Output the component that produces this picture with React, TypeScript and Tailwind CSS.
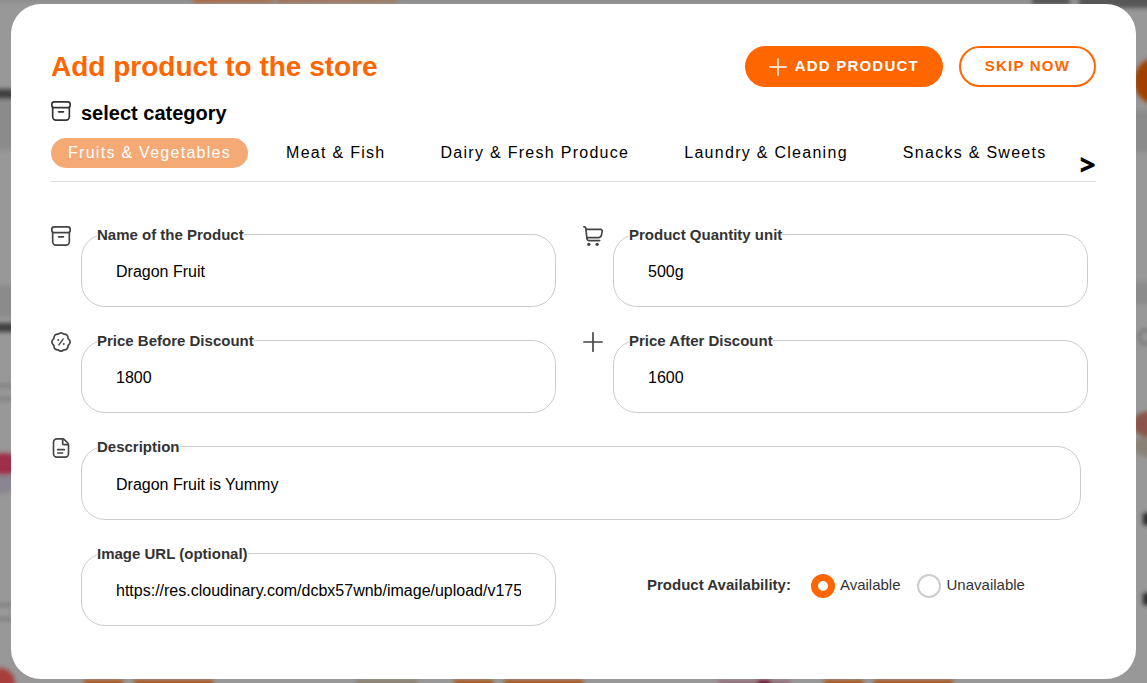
import { useState, type ReactNode } from "react";

type IconProps = { className?: string };

function BoxIcon({ className = "" }: IconProps) {
  return (
    <svg viewBox="0 0 24 24" fill="none" stroke="currentColor" strokeWidth="2" strokeLinecap="round" className={className} aria-hidden="true">
      <rect x="1" y="1" width="22" height="7" rx="3" />
      <path d="M2 8v11a4 4 0 0 0 4 4h12a4 4 0 0 0 4-4V8" />
      <path d="M9 13h6" />
    </svg>
  );
}

function CartIcon({ className = "" }: IconProps) {
  return (
    <svg viewBox="0 0 24 24" fill="none" stroke="currentColor" strokeWidth="2" strokeLinecap="round" strokeLinejoin="round" className={className} aria-hidden="true">
      <path d="M1 1h.4a2 2 0 0 1 2 1.800l1.200 11.600A3 3 0 0 0 7.600 17.500H20" />
      <path d="M4 4h17a2 2 0 0 1 2 2.400l-.8 4.300A4 4 0 0 1 18.300 14H5" />
      <circle cx="7" cy="22" r="2" fill="currentColor" stroke="none" />
      <circle cx="17" cy="22" r="2" fill="currentColor" stroke="none" />
    </svg>
  );
}

function BadgePercentIcon({ className = "" }: IconProps) {
  return (
    <svg viewBox="0 0 24 24" fill="none" stroke="currentColor" strokeWidth="2" strokeLinecap="round" strokeLinejoin="round" className={className} aria-hidden="true">
      <path d="M12 1c1.300 0 2.500.8 3.300 1.600 1.300-.1 2.900.2 3.900 1.200s1.300 2.600 1.200 3.900C21.600 8.800 23 10.300 23 12s-1.400 3.200-2.600 4.300c.1 1.300-.2 2.900-1.200 3.900s-2.600 1.300-3.900 1.200C14.500 22.200 13.300 23 12 23s-2.500-.8-3.300-1.600c-1.300.1-2.900-.2-3.900-1.200s-1.300-2.600-1.200-3.900C2.400 15.200 1 13.700 1 12s1.400-3.200 2.600-4.300c-.1-1.300.2-2.900 1.200-3.900s2.600-1.300 3.900-1.200C9.500 1.800 10.700 1 12 1Z" />
      <path d="m14.500 8.500-5 7" strokeWidth="1.700" />
      <circle cx="8.700" cy="9.500" r="1.200" fill="currentColor" stroke="none" />
      <circle cx="15.300" cy="14.500" r="1.200" fill="currentColor" stroke="none" />
    </svg>
  );
}

function PlusIcon({ className = "" }: IconProps) {
  return (
    <svg viewBox="0 0 24 24" fill="none" stroke="currentColor" strokeWidth="2" strokeLinecap="round" className={className} aria-hidden="true">
      <path d="M12 1v22M1 12h22" />
    </svg>
  );
}

function DocumentIcon({ className = "" }: IconProps) {
  return (
    <svg viewBox="0 0 24 24" fill="none" stroke="currentColor" strokeWidth="2" strokeLinecap="round" strokeLinejoin="round" className={className} aria-hidden="true">
      <path d="M7 1h6.500c1 0 2 .4 2.800 1.200l3.500 3.500C20.600 6.500 21 7.500 21 8.500V19a4 4 0 0 1-4 4H7a4 4 0 0 1-4-4V5a4 4 0 0 1 4-4Z" />
      <path d="M14 1.500V7a1 1 0 0 0 1 1h5.500" />
      <path d="M8 14h8M8 18h6" />
    </svg>
  );
}

const CATEGORIES = [
  "Fruits & Vegetables",
  "Meat & Fish",
  "Dairy & Fresh Produce",
  "Laundry & Cleaning",
  "Snacks & Sweets",
];

type FieldProps = {
  id: string;
  label: string;
  value: string;
  icon?: ReactNode;
  className?: string;
  height?: string;
};

function Field({ id, label, value, icon, className = "", height = "h-[73px]" }: FieldProps) {
  return (
    <div className={`flex ${className}`}>
      <div className="w-[30px] shrink-0 text-[#444]">{icon}</div>
      <div className="relative mt-2 min-w-0 flex-1">
        <label htmlFor={id} className="absolute -top-2 left-4 bg-white text-[15px] leading-[18px] font-bold text-[#333]">
          {label}
        </label>
        <input
          id={id}
          defaultValue={value}
          className={`w-full rounded-3xl border border-[#ccc] bg-white px-[34px] pt-[3px] text-base text-black outline-none focus:border-[#ff6600] ${height}`}
        />
      </div>
    </div>
  );
}

const RADIO =
  "size-6 appearance-none rounded-full border-2 border-[#ccc] bg-white checked:border-[7px] checked:border-[#ff6600]";

/* Dimmed, out-of-focus store page behind the dialog. */
function Backdrop() {
  return (
    <svg viewBox="0 0 1147 683" preserveAspectRatio="none" className="absolute inset-0 size-full bg-[#989898]" aria-hidden="true">
      <defs>
        <linearGradient id="title-fade">
          <stop offset="0" stopColor="#ab6840" />
          <stop offset="1" stopColor="#9c7a66" />
        </linearGradient>
        <filter id="soft" x="-5%" y="-5%" width="110%" height="110%">
          <feGaussianBlur stdDeviation="2" />
        </filter>
      </defs>
      <g filter="url(#soft)">
        <path fill="#8b8b8b" d="M-9-9h1165V2H-9zM-9 100h30v50H-9zM-9 285h30v32H-9zM1130 110h30v42h-30zM1130 282h30v22h-30z" />
        <path fill="url(#title-fade)" d="M193-8h80V3h-80zM277-8h120V3H277z" />
        <path fill="#575757" d="M1032-8h38V5h-38zM1079-8h80V8h-80z" />
        <rect x="1134" y="57" width="60" height="48" rx="24" fill="#a03f00" />
        <path fill="#404040" d="M-9 89H14v10H-9zM-9 323H14v9H-9z" />
        <path fill="#808080" d="M-9 384H14v4H-9zM-9 397H14v4H-9zM-9 603H14v4H-9zM-9 617H14v4H-9z" />
        <ellipse cx="2" cy="482" rx="14" ry="12" fill="#8a8590" />
        <ellipse cx="4" cy="464" rx="16" ry="11" fill="#9f2f48" />
        <circle cx="0" cy="683" r="15" fill="#a83c3c" />
        <circle cx="1146" cy="337" r="7" fill="none" stroke="#777" strokeWidth="3" />
        <ellipse cx="1150" cy="446" rx="17" ry="11" fill="#8a8176" />
        <ellipse cx="1150" cy="424" rx="18" ry="13" fill="#8b554c" />
        <path fill="#2b2b2b" d="M1143 513h14v12h-14zM1143 593h14v12h-14z" />
        <path fill="#ad5418" d="M84 680h39v12H84zM134 680h79v12h-79zM454 680h39v12h-39zM504 680h79v12h-79zM824 680h39v12h-39zM874 680h79v12h-79z" />
        <path fill="#88806a" d="M356 680h62v12h-62z" />
        <path fill="#95717b" d="M718 680h72v12h-72z" />
        <path fill="#731535" d="M757 680h14v12h-14z" />
      </g>
    </svg>
  );
}

export default function App() {
  const [category, setCategory] = useState(CATEGORIES[0]);

  return (
    <div className="relative min-h-screen px-[11px] py-1 font-['Liberation_Sans',Arial,sans-serif]">
      <Backdrop />
      <main role="dialog" aria-labelledby="dialog-title" className="relative min-h-[675px] rounded-[30px] bg-white px-10 pt-[42px] pb-[52px]">
        <header className="flex items-center justify-between">
          <h1 id="dialog-title" className="text-[28px] leading-10 font-bold text-[#ff6600]">
            Add product to the store
          </h1>
          <div className="flex gap-4">
            <button type="button" className="flex h-[41px] items-center gap-2 rounded-full bg-[#ff6600] px-6 text-[15px] font-bold tracking-[0.08em] text-white">
              <PlusIcon className="size-[18px]" />
              ADD PRODUCT
            </button>
            <button type="button" className="h-[41px] rounded-full border-2 border-[#ff6600] bg-white px-6 text-[15px] font-bold tracking-[0.08em] text-[#ff6600]">
              SKIP NOW
            </button>
          </div>
        </header>

        <div className="mt-3 flex gap-[10px]">
          <BoxIcon className="mt-[2px] size-5 text-[#333]" />
          <h2 className="text-xl leading-7 font-bold text-black">select category</h2>
        </div>

        <nav aria-label="Categories" className="mt-[11px] flex h-11 items-start justify-between border-b border-[#ddd]">
          <div className="flex gap-[21px]">
            {CATEGORIES.map((name) => (
              <button
                key={name}
                type="button"
                aria-pressed={name === category}
                onClick={() => setCategory(name)}
                className={`h-[30px] rounded-full px-[17px] text-base tracking-[0.08em] whitespace-nowrap ${
                  name === category ? "bg-[#f5a974] text-white" : "text-black"
                }`}
              >
                {name}
              </button>
            ))}
          </div>
          <button type="button" aria-label="More categories" className="mt-3 font-['Open_Sans',sans-serif] text-[28px] leading-7 font-extrabold text-black">
            &gt;
          </button>
        </nav>

        <form className="mt-11">
          <div className="grid grid-cols-2 gap-x-[27px] gap-y-[25px] pr-2">
            <Field id="name" label="Name of the Product" value="Dragon Fruit" icon={<BoxIcon className="size-5" />} />
            <Field id="unit" label="Product Quantity unit" value="500g" icon={<CartIcon className="size-5" />} />
            <Field id="before" label="Price Before Discount" value="1800" icon={<BadgePercentIcon className="size-5" />} />
            <Field id="after" label="Price After Discount" value="1600" icon={<PlusIcon className="size-5" />} />
            <Field
              id="description"
              label="Description"
              value="Dragon Fruit is Yummy"
              icon={<DocumentIcon className="size-5" />}
              className="col-span-2 mr-[7px]"
              height="h-[74px]"
            />
            <Field id="image" label="Image URL (optional)" value="https://res.cloudinary.com/dcbx57wnb/image/upload/v1754/dragon-fruit.png" />
            <div role="radiogroup" aria-labelledby="availability-label" className="flex items-center pl-16 text-[15px] text-[#333]">
              <span id="availability-label" className="mr-5 font-bold">
                Product Availability:
              </span>
              <label className="mr-4 flex items-center gap-[5px]">
                <input type="radio" name="availability" defaultChecked className={RADIO} />
                Available
              </label>
              <label className="flex items-center gap-[6px]">
                <input type="radio" name="availability" className={RADIO} />
                Unavailable
              </label>
            </div>
          </div>
        </form>
      </main>
    </div>
  );
}
